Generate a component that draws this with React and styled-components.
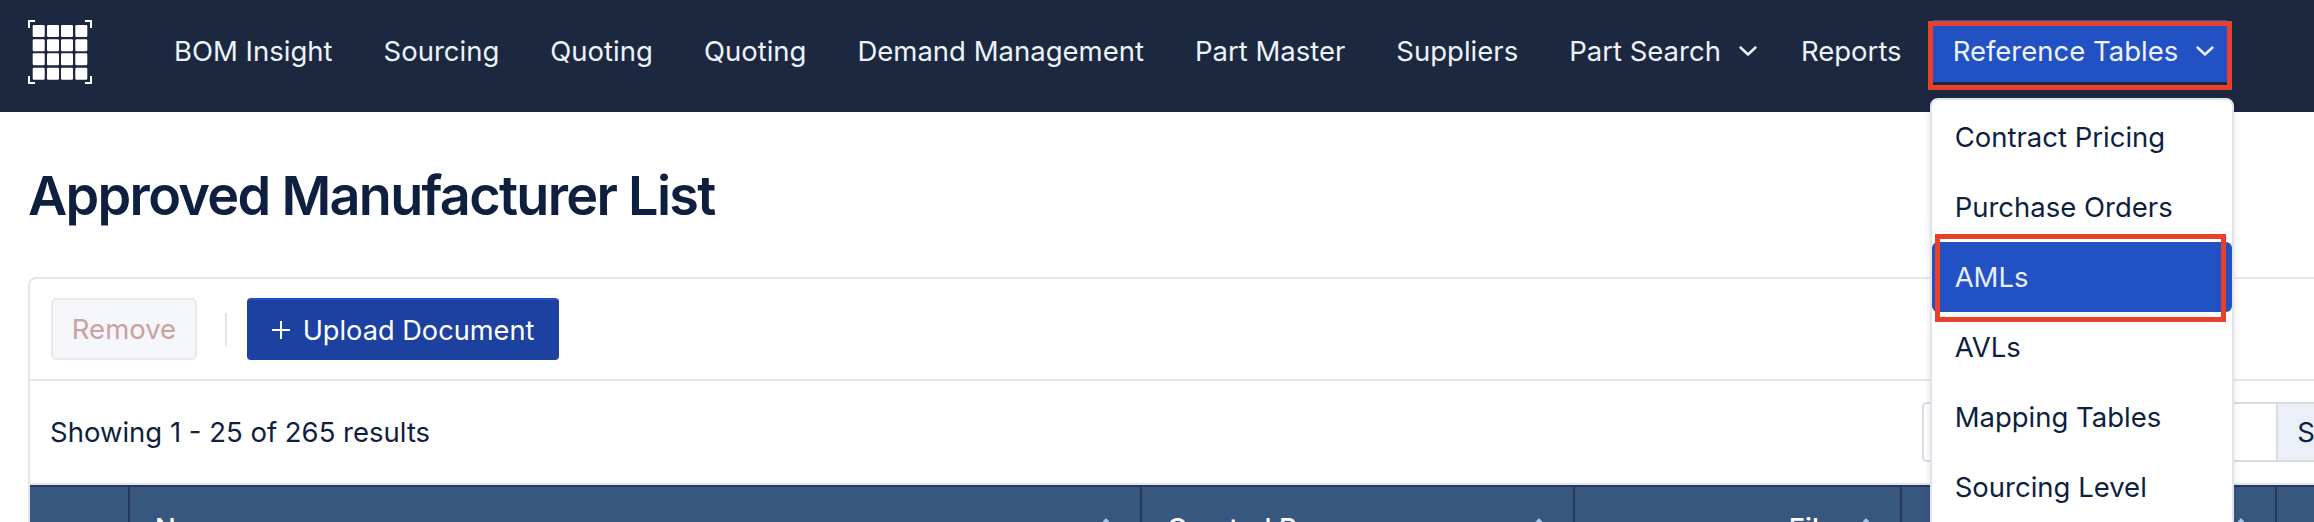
import React from "react";
import styled, { createGlobalStyle } from "styled-components";

const GlobalStyle = createGlobalStyle`
  html, body {
    margin: 0;
    padding: 0;
    height: 100%;
    overflow: hidden;
    background: #fff;
  }
  body {
    font-family: Inter, "Liberation Sans", sans-serif;
    color: #0f1f40;
  }
  * {
    box-sizing: border-box;
  }
`;

const Nav = styled.nav`
  height: 112px;
  padding: 20px 0 0 28px;
  display: flex;
  align-items: flex-start;
  background-color: #1b283f;
  position: relative;
  z-index: 2;
`;

const Logo = styled.svg`
  width: 64px;
  height: 64px;
  margin-right: 62px;
  flex: none;
`;

const NavList = styled.div`
  display: flex;
  gap: 11px;
`;

const NavItem = styled.a`
  height: 62px;
  padding: 0 ${(p) => (p.$hasMenu ? "13px" : "20px")} 0 20px;
  display: flex;
  align-items: center;
  gap: 18px;
  position: relative;
  font-size: 27.5px;
  white-space: nowrap;
  color: #eef2f9;
  background-color: ${(p) => (p.$active ? "#2251c4" : "transparent")};
`;

const Marker = styled.span`
  position: absolute;
  top: ${(p) => p.$top}px;
  left: ${(p) => p.$left}px;
  right: ${(p) => p.$right}px;
  bottom: ${(p) => p.$bottom}px;
  border: 5px solid #e8412a;
  pointer-events: none;
  z-index: 3;
`;

const Menu = styled.div`
  position: absolute;
  top: 78px;
  left: -3px;
  width: 304px;
  height: 500px;
  padding: 2px 0;
  background: #fff;
  border: 2px solid #e1e5ea;
  border-radius: 8px;
  box-shadow: 0 2px 6px rgba(20, 30, 50, 0.12);
`;

const MenuItem = styled.div`
  height: 70px;
  padding: 0 23px;
  display: flex;
  align-items: center;
  position: relative;
  font-size: 27.5px;
  border-radius: 6px;
  color: ${(p) => (p.$active ? "#e8eefb" : "#0f1f40")};
  background-color: ${(p) => (p.$active ? "#2251c4" : "transparent")};
`;

const Main = styled.main`
  padding: 0 0 0 28px;
`;

const Title = styled.h1`
  margin: 0;
  height: 165px;
  padding-top: 50px;
  font-size: 54px;
  line-height: 68px;
  font-weight: 600;
  letter-spacing: -1.7px;
  color: #0f1f40;
`;

const Panel = styled.section`
  width: 2405px;
  border: 2px solid #e2e6ea;
  border-bottom: 0;
  border-radius: 8px 8px 0 0;
`;

const Toolbar = styled.div`
  height: 102px;
  padding: 0 21px;
  display: flex;
  align-items: center;
  border-bottom: 2px solid #e2e6ea;
`;

const RemoveButton = styled.button`
  width: 146px;
  height: 62px;
  padding: 0;
  font: inherit;
  font-size: 27.5px;
  color: #c9a19f;
  background: #f5f6fa;
  border: 2px solid #e8eaf0;
  border-radius: 5px;
`;

const Separator = styled.span`
  width: 2px;
  height: 33px;
  margin: 0 20px 0 28px;
  background: #e2e6ea;
`;

const UploadButton = styled.button`
  width: 312px;
  height: 62px;
  padding: 0;
  display: flex;
  align-items: center;
  justify-content: center;
  gap: 13px;
  font: inherit;
  font-size: 27.2px;
  color: #fff;
  background: #1c41a0;
  border: 0;
  border-top: 2px solid #2251c4;
  border-radius: 4px;
`;

const ResultsRow = styled.div`
  height: 104px;
  padding: 0 21px 0 20px;
  display: flex;
  align-items: center;
  justify-content: space-between;
  border-bottom: 2px solid #e2e6ea;
  font-size: 27.5px;
`;

const SearchGroup = styled.div`
  display: flex;
  height: 60px;
`;

const SearchInput = styled.div`
  width: 354px;
  background: #fff;
  border: 2px solid #d9dde3;
  border-right: 0;
  border-radius: 5px 0 0 5px;
`;

const SearchButton = styled.div`
  width: 134px;
  display: flex;
  align-items: center;
  justify-content: center;
  background: #ebeff8;
  border: 2px solid #d9dde3;
  border-radius: 0 5px 5px 0;
`;

const HeaderRow = styled.div`
  height: 60px;
  display: grid;
  grid-template-columns: 100px 1012px 433px 327px 375px 1fr;
  background: #38577f;
  border-top: 2px solid #26395c;
`;

const HeaderCell = styled.div`
  padding: 25px 26px 0 25px;
  display: flex;
  align-items: flex-start;
  justify-content: ${(p) => (p.$end ? "flex-end" : "space-between")};
  gap: 23px;
  font-size: 27.5px;
  font-weight: 500;
  line-height: 32px;
  color: #fff;
  border-right: 2px solid #26395c;
`;

const SortIcon = styled.svg`
  width: 16px;
  height: 12px;
  margin-top: 6px;
  flex: none;
`;

const navLinks = [
  "BOM Insight",
  "Sourcing",
  "Quoting",
  "Quoting",
  "Demand Management",
  "Part Master",
  "Suppliers",
];

const menuLinks = [
  "Contract Pricing",
  "Purchase Orders",
  "AMLs",
  "AVLs",
  "Mapping Tables",
  "Sourcing Level",
];

const cellLefts = [4.7, 19, 33, 47.3];
const cellTops = [5, 19.3, 33.3, 47.7];

const GridLogo = () => (
  <Logo viewBox="0 0 64 64" fill="none">
    {cellTops.map((y) =>
      cellLefts.map((x) => (
        <rect key={`${x}-${y}`} x={x} y={y} width="12" height="12" rx="1.2" fill="#fff" />
      ))
    )}
    <path
      d="M7 1H1v7M57 1h6v7M1 56v7h6M63 56v7h-6"
      stroke="#fff"
      strokeWidth="2"
    />
  </Logo>
);

const Chevron = () => (
  <svg width="18" height="12" viewBox="0 0 18 12" fill="none">
    <path
      d="M1.5 2.5 9 9.5 16.5 2.5"
      stroke="#eef2f9"
      strokeWidth="2.4"
      strokeLinecap="round"
      strokeLinejoin="round"
    />
  </svg>
);

const PlusIcon = () => (
  <svg width="18" height="18" viewBox="0 0 18 18" fill="none">
    <path d="M9 0v18M0 9h18" stroke="#fff" strokeWidth="2" />
  </svg>
);

const Sort = () => (
  <SortIcon viewBox="0 0 16 12">
    <path d="M8 0 15 8H1Z" fill="#a9c6ef" />
  </SortIcon>
);

const App = () => {
  return (
    <>
      <GlobalStyle />
      <Nav>
        <GridLogo />
        <NavList>
          {navLinks.map((label, i) => (
            <NavItem key={i}>{label}</NavItem>
          ))}
          <NavItem $hasMenu>
            Part Search
            <Chevron />
          </NavItem>
          <NavItem>Reports</NavItem>
          <NavItem $active $hasMenu>
            Reference Tables
            <Chevron />
            <Marker $top={1} $left={-5} $right={-5} $bottom={-8} />
            <Menu>
              {menuLinks.map((label) => (
                <MenuItem key={label} $active={label === "AMLs"}>
                  {label}
                  {label === "AMLs" && (
                    <Marker $top={-8} $left={3} $right={6} $bottom={-10} />
                  )}
                </MenuItem>
              ))}
            </Menu>
          </NavItem>
        </NavList>
      </Nav>
      <Main>
        <Title>Approved Manufacturer List</Title>
        <Panel>
          <Toolbar>
            <RemoveButton>Remove</RemoveButton>
            <Separator />
            <UploadButton>
              <PlusIcon />
              Upload Document
            </UploadButton>
          </Toolbar>
          <ResultsRow>
            <span>Showing 1 - 25 of 265 results</span>
            <SearchGroup>
              <SearchInput />
              <SearchButton>Search</SearchButton>
            </SearchGroup>
          </ResultsRow>
          <HeaderRow>
            <HeaderCell />
            <HeaderCell>
              Name
              <Sort />
            </HeaderCell>
            <HeaderCell>
              Created By
              <Sort />
            </HeaderCell>
            <HeaderCell $end>
              File
              <Sort />
            </HeaderCell>
            <HeaderCell $end>
              <Sort />
            </HeaderCell>
            <HeaderCell />
          </HeaderRow>
        </Panel>
      </Main>
    </>
  );
};

export default App;
